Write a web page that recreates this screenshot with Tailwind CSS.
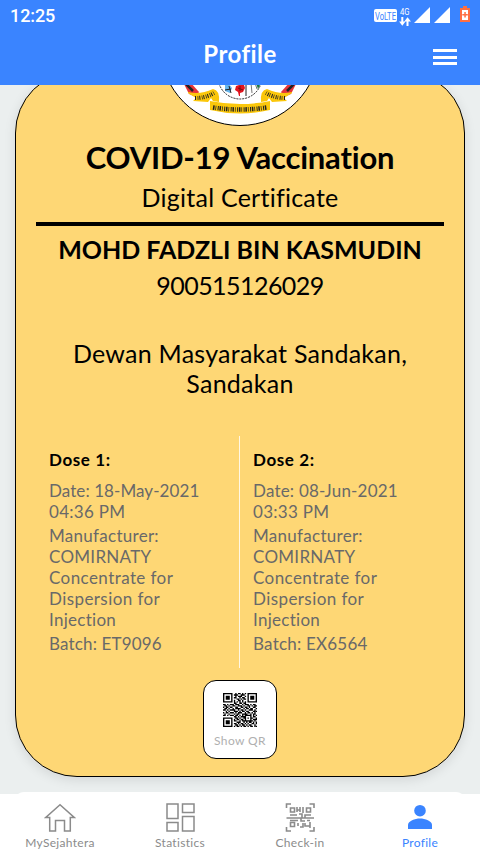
<!DOCTYPE html>
<html lang="en">
<head>
<meta charset="utf-8">
<title>Profile</title>
<script src="https://cdn.jsdelivr.net/npm/@tailwindcss/browser@4"></script>
</head>
<body class="w-[480px] h-[854px] overflow-hidden flex flex-col bg-[#ebefef] font-[Lato,sans-serif] [font-variant-ligatures:none] text-black whitespace-nowrap">
<header class="relative z-10 h-[85px] shrink-0 bg-[#3a84ff] text-white flex flex-col">
  <div class="h-8 flex items-center justify-between pl-[10px] pr-[9px]">
    <span class="font-[Roboto,sans-serif] font-medium text-[18px] leading-8 tracking-[-0.100px]">12:25</span>
    <svg class="w-[98px] h-8" viewBox="373 0 98 32">
      <rect x="374" y="9" width="23" height="13" rx="2" fill="#fff"/>
      <text x="375" y="19.800" font-family="Roboto" font-size="11.500" textLength="21" lengthAdjust="spacingAndGlyphs" fill="#3a84ff">VoLTE</text>
      <text x="400" y="15.300" font-family="Roboto" font-size="8.500" textLength="9.500" lengthAdjust="spacingAndGlyphs" fill="#fff">4G</text>
      <path d="M401.300 17h2v4.500h2.200l-3.200 4.200-3.200-4.200h2.200zM406.500 26h2v-4.500h2.500l-3.500-4.200-3.200 4.200h2.200z" fill="#fff"/>
      <path d="M430 7v16h-16zM450 7v16h-16z" fill="#fff"/>
      <path d="M463 6h4v2h3v14h-10V8h3z" fill="#ff6f43"/>
      <path d="M462 10h6v10h-6z" fill="#fff"/>
      <path d="M464.300 12h1.500v2h2v1.600h-2v2h-1.500v-2h-2V14h2z" fill="#ff6f43"/>
    </svg>
  </div>
  <div class="h-[53px] grid grid-cols-[1fr_auto_1fr]">
    <h1 class="col-start-2 font-bold text-[24px] leading-[44px] tracking-[0.450px]">Profile</h1>
    <svg class="justify-self-end mr-[23px] mt-[16px] w-6 h-[18px]" viewBox="0 0 24 18"><path d="M0 1h24v3H0zM0 8h24v3H0zM0 14h24v3H0z" fill="#fff"/></svg>
  </div>
</header>
<main class="h-[709px] shrink-0 overflow-hidden px-[15px]">
  <section class="-mt-[14px] h-[706px] rounded-[62px] border border-black bg-[#fed775] shadow-[0_3px_12px_rgba(0,0,0,0.1)] flex flex-col items-center">
    <div class="-mt-[106px] w-[160px] h-[160px] shrink-0 rounded-full border border-black bg-white overflow-hidden flex justify-center items-end">
      <svg class="w-[120px] h-[43px] shrink-0" viewBox="180 82 120 43">
        <circle cx="240" cy="77" r="22" fill="#fff" stroke="#222" stroke-dasharray="2 1"/>
        <path d="M225 85l4-1 3 4-2 5-5-2z" fill="#66b5ec"/><path d="M229 86l2 7M225 90l6-1" stroke="#222"/>
        <path d="M236 86l3-1 1-2 4 2 1 3-2 4-3 1v3h-1l-1-4-3-2z" fill="#e3151f"/><path d="M238 88l5 2M240 86v5" stroke="#711"/>
        <path d="M246 82v14" stroke="#222"/><path d="M251 83l1 10M255 83l2 6" stroke="#777"/><path d="M256 83h5l-3 6z" fill="#187846"/>
        <path d="M183 82l7 0 9 10-3 5-7-3z" fill="#e5343a"/><path d="M297 82l-7 0-9 10 3 5 7-3z" fill="#e5343a"/>
        <path d="M184 82l9 9M296 82l-9 9" stroke="#222" stroke-width="2.500"/>
        <path d="M188 92q12 3 25-3 7 1 6 13l-6-1-2-3-3 4-15-1 3-3-8-5z" fill="#fbc70b"/>
        <path d="M292 92q-12 3-25-3-7 1-6 13l6-1 2-3 3 4 15-1-3-3 8-5z" fill="#fbc70b"/>
        <path d="M210 101q30 6 60 0v9q-30 7-60 0z" fill="#fbc70b"/>
        <path d="M195 98q11 0 19-5M285 98q-11 0-19-5" fill="none" stroke="#222" stroke-width="4" stroke-dasharray="1 1.500 .7 1"/>
        <path d="M213 107.500q27 4 54 0" fill="none" stroke="#222" stroke-width="4.500" stroke-dasharray="1.500 1 .7 1.500 1 .8"/>
      </svg>
    </div>
    <h2 class="mt-[13px] h-[39px] font-bold text-[31px] leading-[37px] tracking-[-0.200px]">COVID-19 Vaccination</h2>
    <p class="h-[38px] text-[25px] leading-[38px] tracking-[0.250px]">Digital Certificate</p>
    <div class="mt-[6px] w-[408px] h-1 bg-black shrink-0"></div>
    <h3 class="mt-[4px] h-[38px] font-bold text-[25px] leading-[38px]">MOHD FADZLI BIN KASMUDIN</h3>
    <p class="h-[36px] text-[25px] leading-[34px] tracking-[-0.550px]">900515126029</p>
    <p class="mt-[34px] h-[60px] text-center text-[25px] leading-[30px] tracking-[0.250px]">Dewan Masyarakat Sandakan,<br>Sandakan</p>
    <div class="mt-[38px] w-[408px] h-[232px] shrink-0 grid grid-cols-2">
      <article class="pl-[13px] pt-[12px] border-r border-white/80 text-[17px] leading-[21px] tracking-[0.280px] text-[#696969]">
        <h4 class="font-bold text-black leading-[23px] tracking-[0.600px]">Dose 1:</h4>
        <p class="mt-[9px]"><span class="tracking-[0.080px]">Date: 18-May-2021</span><br>04:36 PM</p>
        <p class="mt-[3px]">Manufacturer:<br>COMIRNATY<br><span class="tracking-[0.420px]">Concentrate for<br>Dispersion for</span><br>Injection</p>
        <p class="mt-[3px] tracking-[0.160px]">Batch: ET9096</p>
      </article>
      <article class="pl-[13px] pt-[12px] text-[17px] leading-[21px] tracking-[0.280px] text-[#696969]">
        <h4 class="font-bold text-black leading-[23px] tracking-[0.600px]">Dose 2:</h4>
        <p class="mt-[9px]"><span class="tracking-[0.200px]">Date: 08-Jun-2021</span><br>03:33 PM</p>
        <p class="mt-[3px]">Manufacturer:<br>COMIRNATY<br><span class="tracking-[0.420px]">Concentrate for<br>Dispersion for</span><br>Injection</p>
        <p class="mt-[3px] tracking-[0.220px]">Batch: EX6564</p>
      </article>
    </div>
    <button class="mt-[12px] w-[74px] h-[79px] shrink-0 rounded-[13px] border border-black bg-white flex flex-col items-center pt-[12px]">
      <svg class="w-[34px] h-[34px]" viewBox="0 0 25 25"><path id="qr" stroke="#000" d=""/></svg>
      <span class="text-[12px] leading-[16px] mt-[6px] text-[#b0b0b0] tracking-[0.400px]">Show QR</span>
    </button>
  </section>
  <div class="mt-[15px] h-5 -mx-[1px] rounded-t-[10px] bg-white"></div>
</main>
<nav class="h-[60px] shrink-0 bg-white grid grid-cols-4 text-[12px] leading-[16px] tracking-[0.300px] text-[#8b8b8b]">
  <a class="flex flex-col items-center pt-[8px]">
    <svg class="w-8 h-8" viewBox="0 0 32 32" fill="none" stroke="#8b8b8b" stroke-width="1.500"><path d="M16 2.700L1.800 15.500H5.700V29H11.500V18.500h9V29h5.800V15.500h3.900z"/></svg>
    <span class="mt-[1px]">MySejahtera</span>
  </a>
  <a class="flex flex-col items-center pt-[8px]">
    <svg class="w-8 h-8" viewBox="0 0 32 32" fill="none" stroke="#8b8b8b" stroke-width="1.500"><path d="M3 2h11v14.500H3zM18.500 2H30v8.500H18.500zM3 20.500h11v8.500H3zM18.500 14.500H30V29H18.500z"/></svg>
    <span class="mt-[1px]">Statistics</span>
  </a>
  <a class="flex flex-col items-center pt-[8px]">
    <svg class="w-8 h-8" viewBox="0 0 32 32" fill="none" stroke="#8b8b8b" stroke-width="1.600"><path d="M2.500 6V2H7M25.500 2H30v4M2.500 25v4H7M25.500 29H30v-4M6.500 6h4v4h-4zM22.500 6h4v4h-4zM6.500 20.500h4v4h-4zM2.500 16h27.500M6 13h7M13 5v5M13 8h3M16 5v5M19 5v6M15 12h3v4M21 16v-3h6M6 18.500h8M17 16v3h4M23 18.500h3M14 21v3M16 25h3v-4M21 21v3h5M26 20v6"/></svg>
    <span class="mt-[1px]">Check-in</span>
  </a>
  <a class="flex flex-col items-center pt-[8px] text-[#3a84ff]">
    <svg class="w-8 h-8" viewBox="0 0 32 32" fill="#3a84ff"><circle cx="16" cy="8.700" r="5.800"/><path d="M4 27v-4c0-4 7-6.500 12-6.500s12 2.500 12 6.500v4z"/></svg>
    <span class="mt-[1px]">Profile</span>
  </a>
</nav>
<script>
const rows = [
"1111111001011010101111111","1000001011100111001000001","1011101001011100101011101","1011101011001011001011101","1011101000110101101011101","1000001010011010001000001","1111111010101010101111111","0000000011001101100000000","1101011101110010111010110","0110100110011101001101011","1011011001100110110100110","0110100101111001011011001","1101011110010110100111010","0010100011101011011000111","1011011101011100101101010","0100100010110011110010110","1101011101101010111110101","0000000011010111100010110","1111111001101001101011001","1000001010110110100010111","1011101011001011111111010","1011101000111001010110101","1011101011010110101001101","1000001001101011010110010","1111111010110101101011011"];
document.getElementById("qr").setAttribute("d", rows.map((r, y) => [...r].map((c, x) => c === "1" ? `M${x} ${y + .5}h1` : "").join("")).join(""));
</script>
</body>
</html>
